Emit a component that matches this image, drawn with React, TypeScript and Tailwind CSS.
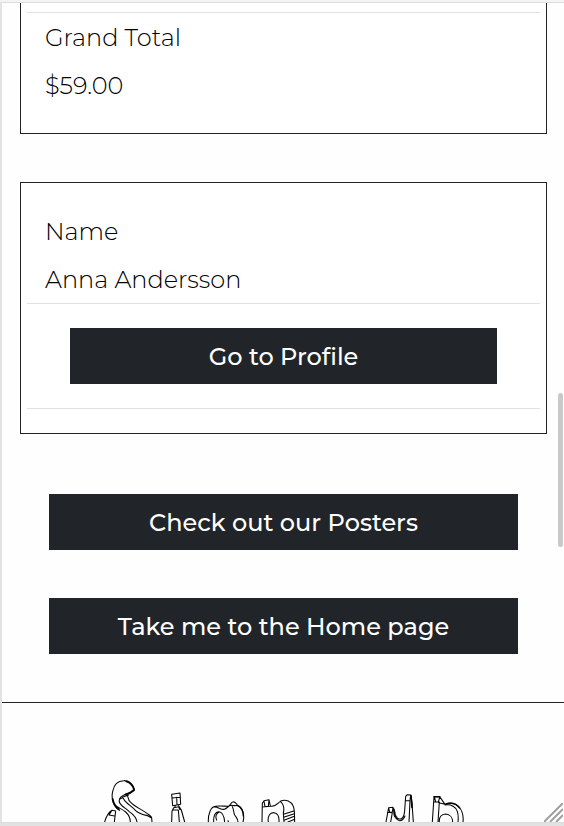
import React from "react";

function Field({ label, value }: { label: string; value: string }) {
  return (
    <dl className="px-[18px] text-2xl font-light leading-9 text-black">
      <dt className="h-12 whitespace-nowrap leading-9">{label}</dt>
      <dd className="h-9 whitespace-nowrap leading-9">{value}</dd>
    </dl>
  );
}

function DarkButton({ children, className }: { children: React.ReactNode; className: string }) {
  return (
    <button className={`flex h-14 shrink-0 items-center justify-center whitespace-nowrap bg-[#212529] text-2xl font-medium leading-9 text-white ${className}`}>
      {children}
    </button>
  );
}

function HandDrawnTitle() {
  return (
    <svg className="ml-[88px] mt-[67px] h-[52px] w-[390px] shrink-0" viewBox="0 0 1170 156" fill="none" stroke="#050505" strokeWidth="3.2" strokeLinecap="round" strokeLinejoin="round">
      <g>
        <path d="M44 156C48 142 54 128 66 121L77 123L73 156M66 121L57 135L74 138" />
        <path d="M89 121C70 110 63 86 68 64C72 43 85 32 101 32C120 31 130 46 133 60C125 68 116 71 107 73C94 78 86 86 88 96C92 108 105 113 117 124C131 134 140 145 141 156M73 105C87 115 97 117 107 126C118 136 121 145 121 156" />
        <path d="M90 87C97 82 101 83 102 89C110 101 126 109 137 122C147 132 160 134 173 137L185 144L186 156M108 74C118 78 112 88 120 95C134 111 157 119 171 130C181 137 186 140 185 144M97 82L116 75" />
        <path strokeWidth="5.5" d="M109 34C122 38 129 47 132 58M132 60C124 68 116 71 106 74M68 87C70 99 76 110 86 118" />
        <path d="M245 73L270 69L272 103L248 107ZM246 84L271 82M260 82L261 104M256 107L254 112M246 124L251 113L266 110L270 119M246 124L245 156M248 119L265 120L268 156M266 107L274 120L284 156" />
      </g>
      <g transform="translate(315 0)">
        <path d="M40 156C39 132 47 111 61 109C75 106 89 109 101 109C108 106 106 95 116 95C122 96 124 102 129 107C143 114 150 136 144 156M57 111C68 109 77 120 88 118C97 115 100 106 109 106C117 108 121 106 128 107M112 110C117 118 115 128 119 135C126 145 129 147 129 156M56 156C55 139 60 125 72 125C85 127 88 143 89 156M65 150C59 138 66 129 73 126M99 152L100 156" />
        <path strokeWidth="4.5" d="M129 107C140 113 145 126 145 138" />
        <path d="M201 156L202 100L207 92L222 89L226 108C239 112 247 101 256 94C272 86 290 95 295 109C300 122 298 142 299 156M207 94L210 110L220 109L222 90M202 111L226 109M220 156C217 139 225 127 237 128C250 130 253 144 252 156M256 94C266 103 269 113 265 129L267 156M268 132L296 123M268 141L298 131M269 150L298 139M279 156L299 148" />
      </g>
      <path d="M888 156L896 113L909 112L913 126C918 144 925 150 934 146C943 142 943 131 944 121L947 79L952 74L963 75L966 99L970 156M896 114L899 127L907 126L909 113M892 127L907 128L902 156M912 126C909 138 921 150 929 152C938 152 943 143 945 138M947 92L960 92L962 76M960 92L957 156" />
      <path strokeWidth="5" d="M963 78L966 112M911 117L914 128" />
      <path d="M1027 156L1032 80L1049 80L1065 103M1033 81L1037 95L1045 96L1049 82M1032 95L1048 96L1044 156M1046 98L1065 103C1078 96 1095 98 1107 111C1117 122 1121 138 1119 156M1065 105C1084 102 1098 111 1102 124C1106 137 1105 147 1104 156M1048 156C1047 142 1054 133 1067 132C1080 133 1088 143 1088 156" />
      <path strokeWidth="4.5" d="M1032 80L1049 80M1067 103C1083 97 1098 100 1109 114" />
    </svg>
  );
}

export default function App() {
  return (
    <div className="flex h-[826px] w-[564px] flex-col overflow-hidden bg-[#f4f4f4] font-['Montserrat','Inter',sans-serif]">
      <div className="h-0.5 shrink-0" />
      <div className="relative flex h-[820px] shrink-0 flex-col overflow-hidden border-l-2 border-t border-l-[#e3e3e3] border-t-[#dddddd] bg-[#fefefe]">
        <section className="ml-[18px] h-[131px] w-[527px] shrink-0 border border-t-0 border-[#212529] bg-white px-1.5 pt-[9px]">
          <div className="border-t border-[#dee2e6] pt-[7px]">
            <Field label="Grand Total" value="$59.00" />
          </div>
        </section>

        <section className="ml-[18px] mt-12 flex h-[252px] w-[527px] shrink-0 flex-col border border-[#212529] bg-white px-1.5 pt-[31px]">
          <Field label="Name" value="Anna Andersson" />
          <div className="mt-[5px] flex h-[106px] shrink-0 flex-col items-center border-y border-[#dee2e6] pt-6">
            <DarkButton className="w-[427px] pt-px">Go to Profile</DarkButton>
          </div>
        </section>

        <div className="ml-[47px] mt-[60px] flex w-[469px] shrink-0 flex-col gap-12">
          <DarkButton className="w-full pt-px">Check out our Posters</DarkButton>
          <DarkButton className="w-full pt-px">Take me to the Home page</DarkButton>
        </div>

        <footer className="mt-12 flex shrink-0 flex-col border-t border-[#212529]">
          <HandDrawnTitle />
        </footer>

        <div className="absolute right-[1px] top-[390px] h-[154px] w-[5px] rounded-full bg-[#c9c9c9]" />
        <svg className="absolute bottom-0 right-[1px] h-[19px] w-[19px]" viewBox="0 0 19 19" stroke="#a0a0a0" strokeWidth="2">
          <path d="M0 19L19 0M6 19L19 6M12 19L19 12" />
        </svg>
      </div>
      <div className="h-1 shrink-0 border-t border-[#dcdcdc] bg-[#e2e2e2]" />
    </div>
  );
}
